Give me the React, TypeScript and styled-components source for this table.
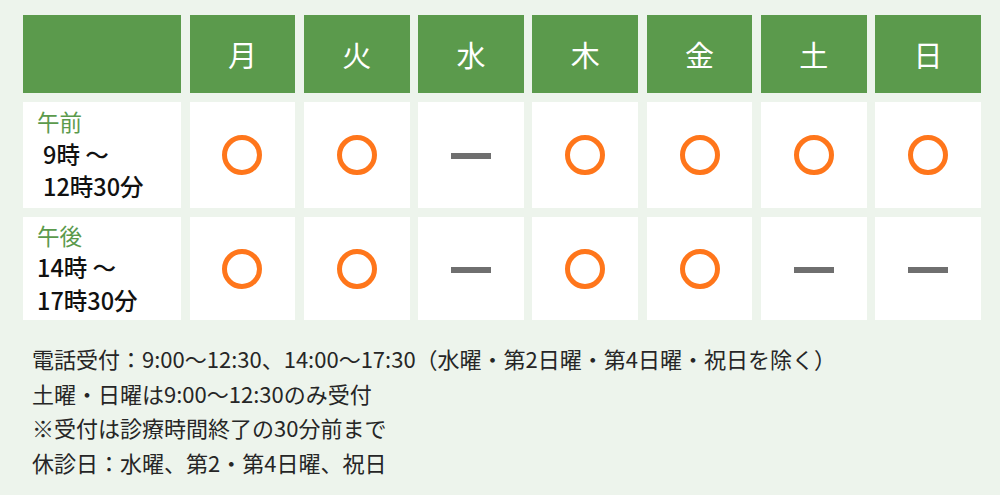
import styled, { createGlobalStyle } from 'styled-components';

const GlobalStyle = createGlobalStyle`
  html, body {
    margin: 0;
    padding: 0;
    background: #edf4ec;
  }
  body {
    font-family: "Noto Sans CJK JP", "Noto Sans", sans-serif;
    color: #1e1e1e;
  }
`;

const Page = styled.main`
  width: 1000px;
  height: 495px;
  padding: 15px 19px 0 23px;
  box-sizing: border-box;
  background: #edf4ec;
`;

const Schedule = styled.div`
  display: grid;
  grid-template-columns: 158px repeat(7, 1fr);
  grid-template-rows: 78px 106px 103px;
  column-gap: 8.5px;
  row-gap: 9px;
  width: 958px;
`;

const HeadCell = styled.div`
  background: #5b9a4c;
  color: #fff;
  font-size: 29px;
  display: flex;
  align-items: center;
  justify-content: center;
`;

const LabelCell = styled.div`
  background: #fff;
  padding: 0 0 2px 14px;
  font-size: 23.5px;
  line-height: 32.5px;
  display: flex;
  flex-direction: column;
  justify-content: center;
`;

const Period = styled.span`
  color: #5b9a4c;
  font-size: 22.5px;
`;

const Hours = styled.span<{ $indent?: boolean }>`
  padding-left: ${(p) => (p.$indent ? '6px' : '0')};
  font-weight: 500;
  color: #111;
  white-space: pre;
`;

const MarkCell = styled.div`
  background: #fff;
  display: flex;
  align-items: center;
  justify-content: center;
`;

const Open = styled.span`
  width: 40px;
  height: 40px;
  border: 5px solid #ff761b;
  border-radius: 50%;
  box-sizing: border-box;
`;

const Closed = styled.span`
  width: 40px;
  height: 6px;
  background: #6f6f6f;
  margin-top: 2px;
`;

const Notes = styled.div`
  margin: 21px 0 0 9px;
  font-size: 22px;
  line-height: 34.5px;
  color: #262626;
`;

const days = ['月', '火', '水', '木', '金', '土', '日'];

const rows = [
  { period: '午前', lines: ['9時 ～', '12時30分'], indent: true, open: [1, 1, 0, 1, 1, 1, 1] },
  { period: '午後', lines: ['14時 ～', '17時30分'], indent: false, open: [1, 1, 0, 1, 1, 0, 0] },
];

const notes = [
  '電話受付：9:00～12:30、14:00～17:30（水曜・第2日曜・第4日曜・祝日を除く）',
  '土曜・日曜は9:00～12:30のみ受付',
  '※受付は診療時間終了の30分前まで',
  '休診日：水曜、第2・第4日曜、祝日',
];

const App = () => {
  return (
    <>
      <GlobalStyle />
      <Page>
        <Schedule>
          <HeadCell />
          {days.map((d) => (
            <HeadCell key={d}>{d}</HeadCell>
          ))}
          {rows.map((r) => (
            <>
              <LabelCell key={r.period}>
                <Period>{r.period}</Period>
                {r.lines.map((l) => (
                  <Hours key={l} $indent={r.indent}>
                    {l}
                  </Hours>
                ))}
              </LabelCell>
              {r.open.map((o, i) => (
                <MarkCell key={r.period + i}>{o ? <Open /> : <Closed />}</MarkCell>
              ))}
            </>
          ))}
        </Schedule>
        <Notes>
          {notes.map((n) => (
            <div key={n}>{n}</div>
          ))}
        </Notes>
      </Page>
    </>
  );
};

export default App;
